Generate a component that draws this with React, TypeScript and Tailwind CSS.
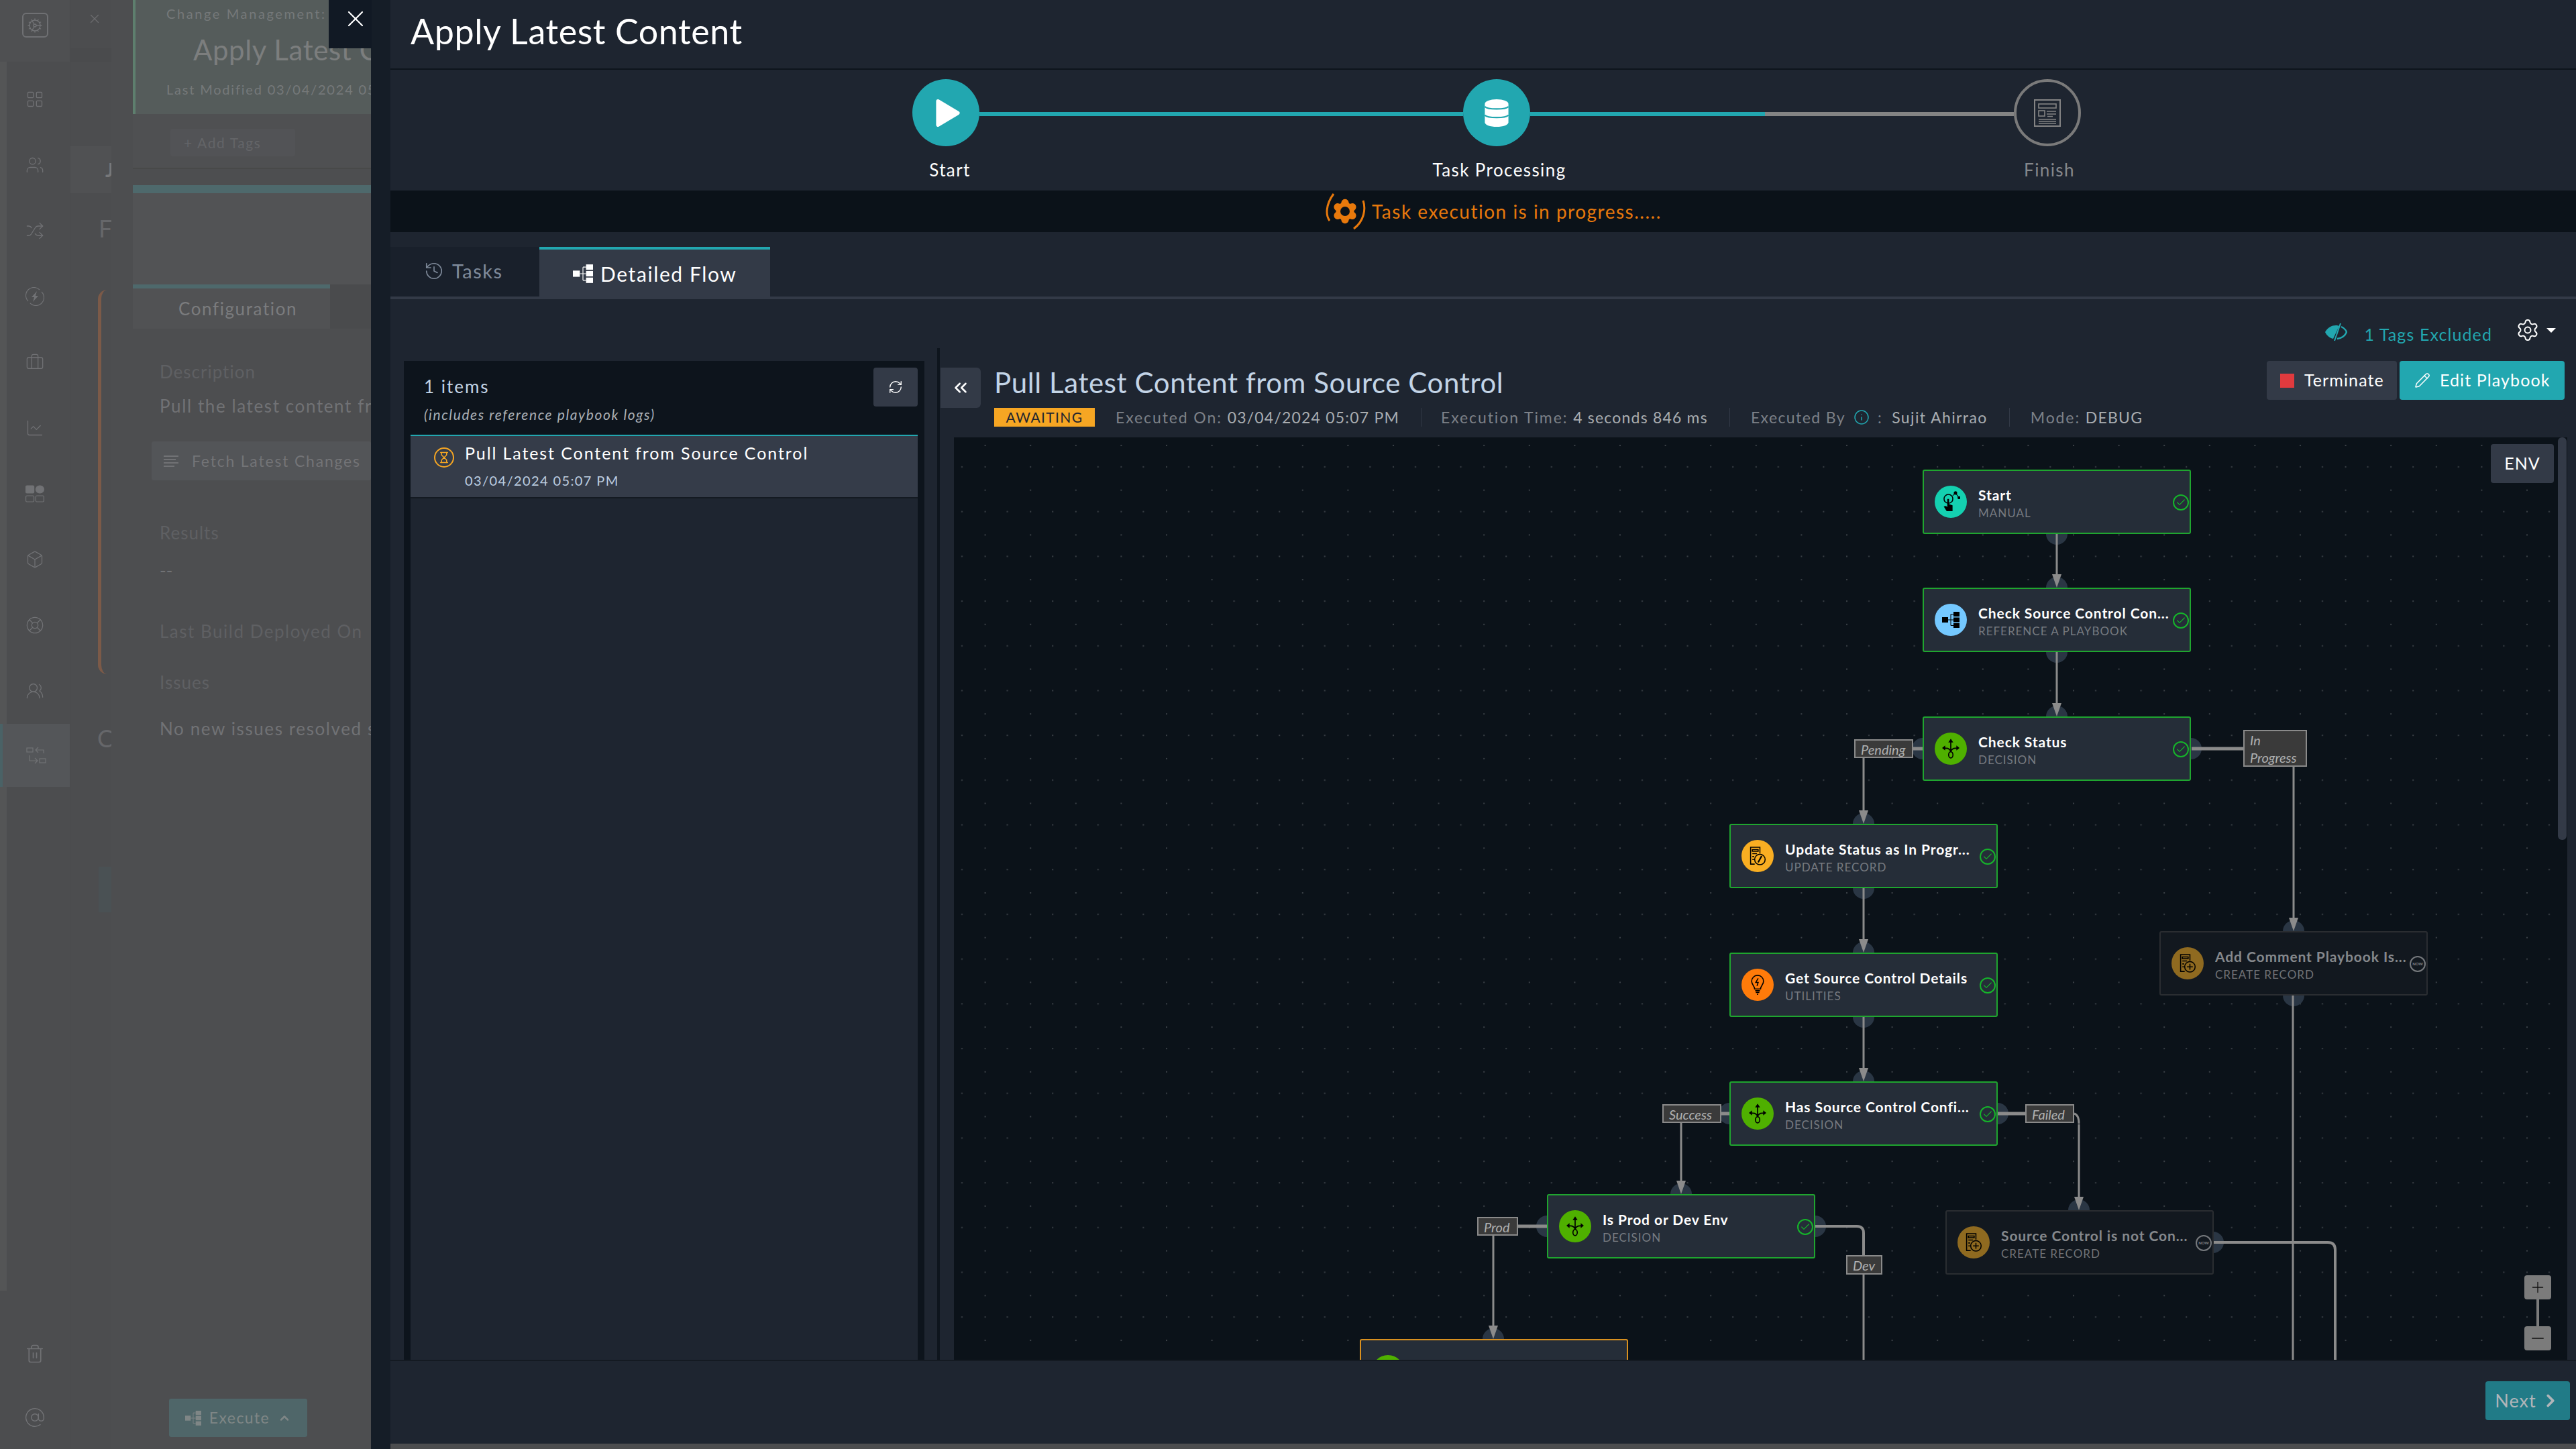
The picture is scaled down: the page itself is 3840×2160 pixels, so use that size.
import React from "react";
import { X, Users, Shuffle, Briefcase, ChartLine, Box, LifeBuoy, Trash2, AtSign, Settings, Pencil, RefreshCw, ChevronsLeft, ChevronRight, Hourglass, Info, Plus, Minus, Check, History, LayoutGrid, Users2, Cog, ChevronUp } from "lucide-react";

function FlowIcon({ className = "", fill = "currentColor" }: { className?: string; fill?: string }) {
  return (
    <svg viewBox="0 0 26 26" className={className} fill={fill}>
      <rect x="0" y="9" width="9" height="8" />
      <rect x="17" y="1" width="9" height="7" />
      <rect x="17" y="9.5" width="9" height="7" />
      <rect x="17" y="18" width="9" height="7" />
      <path d="M9 13H17M13 4.5V21.5M13 4.5H17M13 21.5H17" stroke={fill} strokeWidth="1" fill="none" />
    </svg>
  );
}

function DecisionIcon() {
  return (
    <svg viewBox="0 0 28 32" className="w-[26px] h-[30px]" fill="none" stroke="#000" strokeWidth="1.8">
      <path d="M14 3V20M14 20C11 15 8 15 2 15M14 20C17 15 20 15 26 15" />
      <path d="M14 0L10 6H18ZM0 15L5 11V19ZM28 15L23 11V19Z" fill="#000" stroke="none" />
      <ellipse cx="14" cy="26" rx="3.5" ry="5" />
    </svg>
  );
}

function RecordIcon({ kind }: { kind: "edit" | "plus" }) {
  return (
    <svg viewBox="0 0 30 34" className="w-[26px] h-[30px]" fill="none" stroke="#000" strokeWidth="1.8">
      <path d="M19 12V2H3V31H10" />
      <path d="M6 6H16V9H6ZM6 13H14M6 18H9M6 23H9" />
      <circle cx="19" cy="23" r="9" />
      {kind === "plus" ? <path d="M19 18V28M14 23H24" /> : <path d="M16 28L22 17" strokeWidth="2.6" />}
    </svg>
  );
}

function ManualIcon() {
  return (
    <svg viewBox="0 0 32 36" className="w-[28px] h-[32px]" fill="none" stroke="#000" strokeWidth="1.8">
      <circle cx="12" cy="13" r="7.5" />
      <path d="M19 8L24 3L30 11" strokeWidth="1.2" />
      <circle cx="24" cy="3" r="2" fill="#000" />
      <circle cx="30" cy="11" r="1.6" fill="#000" />
      <path d="M10 13H13V22L19 24V34H9L4 26L8 25L10 27Z" fill="#000" stroke="none" />
    </svg>
  );
}

function NodeIcon({ type }: { type: string }) {
  if (type === "manual") return <ManualIcon />;
  if (type === "flow") return <FlowIcon className="w-[26px] h-[26px]" fill="#000" />;
  if (type === "decision") return <DecisionIcon />;
  if (type === "edit") return <RecordIcon kind="edit" />;
  if (type === "plus") return <RecordIcon kind="plus" />;
  return (
    <svg viewBox="0 0 24 34" className="w-[22px] h-[30px]" fill="none" stroke="#000" strokeWidth="1.8">
      <path d="M7 24C7 19 2 17 2 11A10 10 0 0 1 22 11C22 17 17 19 17 24Z" />
      <path d="M13 6L9 13H13L11 19" strokeWidth="1.8" />
      <path d="M8 27H16M9 30H15M11 33H13" strokeWidth="2" />
    </svg>
  );
}

function RailZap() {
  return (
    <svg viewBox="0 0 28 28" className="w-[28px] h-[28px]" fill="none" stroke="currentColor" strokeWidth="1.2">
      <path d="M4 21A12 12 0 0 1 21 4M24 7A12 12 0 0 1 7 24" />
      <path d="M17 6L9 15H13L11 22L19 13H15Z" fill="currentColor" stroke="none" />
    </svg>
  );
}

function RailWidgets() {
  return (
    <svg viewBox="0 0 28 28" className="w-[28px] h-[28px]" fill="none" stroke="currentColor" strokeWidth="1.2">
      <rect x="0.6" y="2" width="12" height="11" rx="1.5" fill="currentColor" />
      <rect x="15.4" y="2" width="12" height="11" rx="5.5" fill="currentColor" />
      <rect x="0.6" y="17" width="12" height="9" rx="1.5" />
      <rect x="15.4" y="17" width="12" height="9" rx="1.5" />
    </svg>
  );
}

function RailSwap() {
  return (
    <svg viewBox="0 0 30 28" className="w-[30px] h-[28px]" fill="none" stroke="currentColor" strokeWidth="1.2">
      <rect x="1" y="3" width="9" height="6" />
      <rect x="20" y="19" width="9" height="6" />
      <path d="M26 11V6H15M18 2L14 6L18 10" />
      <path d="M5 14V22H16M13 18L17 22L13 26" />
    </svg>
  );
}

const nodes = [
  { pos: "left-[1444px] top-[48px]", title: "Start", sub: "MANUAL", icon: "manual", bg: "bg-[#14d0b0]", state: "done" },
  { pos: "left-[1444px] top-[224px]", title: "Check Source Control Con...", sub: "REFERENCE A PLAYBOOK", icon: "flow", bg: "bg-[#74c8ff]", state: "done" },
  { pos: "left-[1444px] top-[416px]", title: "Check Status", sub: "DECISION", icon: "decision", bg: "bg-[#4fb000]", state: "done" },
  { pos: "left-[1156px] top-[576px]", title: "Update Status as In Progr...", sub: "UPDATE RECORD", icon: "edit", bg: "bg-[#f9ae22]", state: "done" },
  { pos: "left-[1156px] top-[768px]", title: "Get Source Control Details", sub: "UTILITIES", icon: "bulb", bg: "bg-[#ff7b0a]", state: "done" },
  { pos: "left-[1156px] top-[960px]", title: "Has Source Control Confi...", sub: "DECISION", icon: "decision", bg: "bg-[#4fb000]", state: "done" },
  { pos: "left-[884px] top-[1128px]", title: "Is Prod or Dev Env", sub: "DECISION", icon: "decision", bg: "bg-[#4fb000]", state: "done" },
  { pos: "left-[1797px] top-[736px]", title: "Add Comment Playbook Is...", sub: "CREATE RECORD", icon: "plus", bg: "bg-[#8f6a20]", state: "skip" },
  { pos: "left-[1478px] top-[1152px]", title: "Source Control is not Con...", sub: "CREATE RECORD", icon: "plus", bg: "bg-[#8f6a20]", state: "skip" },
  { pos: "left-[605px] top-[1344px]", title: "", sub: "", icon: "decision", bg: "bg-[#4fb000]", state: "run" },
];

const labels = [
  { pos: "left-[1342px] top-[450px] w-[88px] h-[28px]", text: "Pending" },
  { pos: "left-[1922px] top-[436px] w-[95px] h-[55px]", text: "In Progress" },
  { pos: "left-[1056px] top-[994px] w-[88px] h-[28px]", text: "Success" },
  { pos: "left-[1597px] top-[994px] w-[73px] h-[28px]", text: "Failed" },
  { pos: "left-[780px] top-[1162px] w-[61px] h-[28px]", text: "Prod" },
  { pos: "left-[1330px] top-[1219px] w-[54px] h-[29px]", text: "Dev" },
];

function FlowNode({ n }: { n: (typeof nodes)[number] }) {
  const skip = n.state === "skip";
  const border = n.state === "done" ? "border-[#1fa52f]" : n.state === "run" ? "border-[#d9901f]" : "border-[#2a2d31]";
  return (
    <div className={`absolute ${n.pos} w-[400px] h-[96px] rounded-[3px] border-2 ${border} ${skip ? "bg-[#12181f]" : "bg-[#252d38]"} flex items-center pl-[16px]`}>
      <div className={`w-[48px] h-[48px] rounded-full ${n.bg} flex items-center justify-center shrink-0`}>
        <NodeIcon type={n.icon} />
      </div>
      <div className="ml-[17px] w-[290px] overflow-hidden whitespace-nowrap pt-[5px]">
        <div className={`text-[21px] leading-[28px] font-bold tracking-[0.9px] ${skip ? "text-[#85888c]" : "text-white"}`}>{n.title}</div>
        <div className={`text-[17px] leading-[25px] tracking-[1px] ${skip ? "text-[#6f7276]" : "text-[#777b81]"}`}>{n.sub}</div>
      </div>
      {n.title && (
        <div className={`absolute right-[1px] top-[35px] w-[24px] h-[24px] rounded-full border-2 flex items-center justify-center ${skip ? "border-[#777a7e]" : "border-[#15b52a]"}`}>
          {skip ? <span className="text-[6px] leading-none text-[#85888c] font-bold">NOW</span> : <Check size={16} strokeWidth={1.6} className="text-[#15b52a]" />}
        </div>
      )}
    </div>
  );
}

function Edges() {
  const ports: [number, number][] = [
    [3066, 796], [3066, 876], [3066, 972], [3066, 1068], [2866, 1116], [3266, 1116],
    [2778, 1228], [2778, 1324], [2778, 1420], [2778, 1516], [2778, 1612], [2578, 1660], [2978, 1660],
    [3419, 1388], [3419, 1484], [2506, 1780], [2306, 1828], [2706, 1828], [3099, 1804], [3299, 1852], [2226, 1996],
  ];
  const arrows: [number, number][] = [[3066, 876], [3066, 1068], [2778, 1228], [2778, 1420], [2778, 1612], [3419, 1388], [2506, 1780], [3099, 1804], [2226, 1996]];
  return (
    <svg viewBox="1422 652 2405 1375" className="absolute inset-0 w-full h-full">
      <defs>
        <pattern id="dots" x="3428" y="663" width="67.6" height="66.7" patternUnits="userSpaceOnUse">
          <rect x="0" y="0" width="2" height="2" fill="#3a4046" />
          <rect x="0" y="32" width="2" height="2" fill="#3a4046" />
          <rect x="33" y="32" width="2" height="2" fill="#3a4046" />
        </pattern>
      </defs>
      <rect x="1422" y="652" width="2405" height="1375" fill="url(#dots)" />
      {ports.map(([x, y]) => (
        <circle key={`${x}-${y}`} cx={x} cy={y} r="16" fill="#2a3644" />
      ))}
      <g stroke="#8b8b8b" fill="none" strokeWidth="3">
        <path d="M3066 796V858M3066 972V1050M2778 1130V1210M2778 1324V1402M2778 1516V1594" />
        <path d="M3419 1143V1370M3418 1484V2027M2506 1674V1762M3099 1676V1786M2226 1842V1978" />
        <path d="M3092 1660H3092Q3099 1662 3099 1675" />
        <path d="M2778 1900V2027" />
        <path d="M3299 1852H3470Q3481 1852 3481 1863V2027" strokeWidth="4" />
        <path d="M2706 1828H2768Q2778 1828 2778 1838V1871" strokeWidth="4" />
        <path d="M2852 1116H2866M3267 1116H3344M2566 1660H2578M2978 1660H3019M2263 1828H2306" strokeWidth="5" />
      </g>
      {arrows.map(([x, y]) => (
        <polygon key={`a${x}-${y}`} points={`${x - 7},${y - 20} ${x + 7},${y - 20} ${x},${y}`} fill="#8b8b8b" />
      ))}
    </svg>
  );
}

function Rail() {
  const icons = [
    <LayoutGrid size={28} strokeWidth={1.1} />,
    <Users size={28} strokeWidth={1.1} />,
    <Shuffle size={28} strokeWidth={1.1} />,
    <RailZap />,
    <Briefcase size={28} strokeWidth={1.1} />,
    <ChartLine size={28} strokeWidth={1.1} />,
    <RailWidgets />,
    <Box size={28} strokeWidth={1.1} />,
    <LifeBuoy size={28} strokeWidth={1.1} />,
    <Users2 size={28} strokeWidth={1.1} />,
  ];
  return (
    <div className="w-[104px] shrink-0 h-full flex flex-col bg-[#4c4d4f] text-[#717275]">
      <div className="h-[92px] shrink-0 bg-[#4f5052] flex items-start justify-center pt-[19px]">
        <div className="w-[39px] h-[37px] rounded-[6px] border-2 border-[#6f7073] flex items-center justify-center">
          <Cog size={24} strokeWidth={1.4} />
        </div>
      </div>
      <div className="h-[1832px] shrink-0 border-l-[10px] border-[#545556] flex flex-col pt-[7px]">
        {icons.map((icon, i) => (
          <div key={i} className="h-[98px] shrink-0 pr-[10px] w-full flex items-center justify-center">
            {icon}
          </div>
        ))}
        <div className="h-[94px] shrink-0 w-[104px] -ml-[10px] bg-[#545659] border-l-4 border-[#4a6266] flex items-center justify-center">
          <RailSwap />
        </div>
      </div>
      <div className="mt-auto flex flex-col items-center gap-[64px] pb-[31px]">
        <Trash2 size={30} strokeWidth={1.3} />
        <AtSign size={32} strokeWidth={1.1} />
      </div>
    </div>
  );
}

function DimContent() {
  return (
    <div className="w-[355px] shrink-0 h-full flex flex-col overflow-hidden whitespace-nowrap bg-[#4d4e50] relative">
      <div className="h-[170px] bg-[#555c5b] border-l-4 border-[#5e7f6e] pl-[46px] pt-[5px] shrink-0">
        <div className="text-[20px] leading-[30px] tracking-[2.6px] text-[#75797a]">Change Management:</div>
        <div className="flex items-center h-[78px] ml-[20px]">
          <div className="w-[4px] h-[78px] bg-[#686b6e]" />
          <div className="ml-[20px] text-[42px] tracking-[0.6px] text-[#7c7e7e]">Apply Latest Content</div>
        </div>
        <div className="mt-[5px] text-[20px] leading-[30px] tracking-[1.8px] text-[#75797a]">Last Modified 03/04/2024 05:07 PM</div>
      </div>
      <div className="h-[82px] bg-[#4f5052] border-b-2 border-[#484949] pl-[56px] pt-[22px] shrink-0">
        <div className="w-[186px] h-[41px] bg-[#525356] rounded-[3px] pl-[20px] text-[21px] leading-[41px] tracking-[1.6px] text-[#646568]">+ Add Tags</div>
      </div>
      <div className="h-[24px] shrink-0" />
      <div className="h-[12px] bg-[#4e696c] shrink-0" />
      <div className="h-[136px] bg-[#525355] shrink-0" />
      <div className="flex shrink-0 h-[66px]">
        <div className="w-[294px] border-t-[6px] border-[#4e696c] bg-[#515254] text-[26px] leading-[60px] text-[#7b7c7e] tracking-[1.6px] pl-[68px]">Configuration</div>
        <div className="flex-1 bg-[#4a4b4d]" />
      </div>
      <div className="pl-[40px] pt-[44px]">
        <div className="text-[26px] leading-[40px] tracking-[1px] text-[#5f6063]">Description</div>
        <div className="text-[26px] leading-[40px] mt-[11px] text-[#717275] tracking-[1.6px]">Pull the latest content from</div>
        <div className="mt-[33px] -ml-[12px] h-[58px] bg-[#535558] rounded-[3px] flex items-center pl-[18px] gap-[18px] text-[23px] text-[#737477] tracking-[1.8px]">
          <div className="w-[24px] flex flex-col gap-[3px]">
            <div className="h-[2px] w-[22px] bg-[#717275]" />
            <div className="h-[2px] w-[18px] bg-[#717275]" />
            <div className="h-[2px] w-[22px] bg-[#717275]" />
            <div className="h-[2px] w-[16px] bg-[#717275]" />
          </div>
          Fetch Latest Changes
        </div>
        <div className="mt-[58px] text-[26px] leading-[40px] tracking-[1px] text-[#5f6063]">Results</div>
        <div className="text-[26px] leading-[50px] text-[#717275] mt-[11px]">--</div>
        <div className="mt-[46px] text-[26px] leading-[40px] tracking-[1.5px] text-[#5f6063]">Last Build Deployed On</div>
        <div className="mt-[36px] text-[26px] leading-[40px] tracking-[1px] text-[#5f6063]">Issues</div>
        <div className="mt-[29px] text-[26px] leading-[40px] text-[#717275] tracking-[1.6px]">No new issues resolved since</div>
      </div>
      <div className="absolute left-[54px] top-[2085px] w-[206px] h-[57px] bg-[#4f6669] rounded-[3px] flex items-center justify-center gap-[12px] text-[23px] text-[#7f8686] tracking-[1.4px]">
        <FlowIcon className="w-[24px] h-[24px]" />
        Execute
        <ChevronUp size={20} strokeWidth={3} />
      </div>
    </div>
  );
}

function DimBack() {
  return (
    <div className="w-[553px] shrink-0 h-full flex bg-[#4c4d4f] overflow-hidden">
      <Rail />
      <div className="w-[62px] shrink-0 h-full relative whitespace-nowrap overflow-hidden text-[#77787a] border-l border-[#4a4b4d]">
        <div className="ml-[25px] mt-[17px] text-[#6c6d70]">
          <X size={22} strokeWidth={1.3} />
        </div>
        <div className="mt-[33px] h-[20px] bg-[#4a4b4d]" />
        <div className="mt-[126px] h-[70px] bg-[#505153] pl-[52px] text-[28px] leading-[70px] font-bold">J</div>
        <div className="mt-[30px] pl-[42px] text-[36px] leading-[44px] text-[#66676a]">F</div>
        <div className="mt-[70px] ml-[41px] h-[573px] w-[30px] rounded-l-[14px] border-l-[5px] border-[#7c5a48]" />
        <div className="mt-[73px] pl-[40px] text-[36px] leading-[44px] text-[#66676a]">C</div>
        <div className="mt-[170px] ml-[42px] h-[68px] bg-[#4a5154]" />
      </div>
      <div className="w-[32px] shrink-0 h-full bg-[#4d4e50]" />
      <DimContent />
    </div>
  );
}

function Stepper() {
  return (
    <div className="h-[180px] shrink-0 flex flex-col pt-[14px]">
      <div className="flex items-center ml-[778px] text-white">
        <div className="w-[100px] h-[100px] rounded-full bg-[#22a7b0] flex items-center justify-center">
          <svg viewBox="0 0 36 42" className="w-[36px] h-[41px] ml-[6px]" fill="#fff" stroke="#fff" strokeWidth="6" strokeLinejoin="round">
            <path d="M3 3L33 21L3 39Z" />
          </svg>
        </div>
        <div className="w-[721px] h-[6px] mt-[4px] bg-[#22a7b0]" />
        <div className="w-[100px] h-[100px] rounded-full bg-[#22a7b0] flex items-center justify-center">
          <svg viewBox="0 0 36 42" className="w-[36px] h-[41px]" fill="#fff">
            <path d="M0 7C0 3 8 0 18 0S36 3 36 7V35C36 39 28 42 18 42S0 39 0 35Z" />
            <path d="M0 11C3 16 33 16 36 11M0 24C3 29 33 29 36 24" fill="none" stroke="#22a7b0" strokeWidth="2.2" />
          </svg>
        </div>
        <div className="w-[350px] h-[6px] mt-[4px] bg-[#22a7b0]" />
        <div className="w-[371px] h-[6px] mt-[4px] bg-[#848484]" />
        <div className="w-[100px] h-[100px] rounded-full border-[4px] border-[#7a7a7a] flex items-center justify-center">
          <svg viewBox="0 0 40 41" className="w-[40px] h-[41px]" fill="none" stroke="#848484" strokeWidth="2">
            <rect x="1" y="1" width="38" height="39" />
            <rect x="7" y="7" width="26" height="6" strokeWidth="1.6" />
            <rect x="7" y="17" width="9" height="8" strokeWidth="1.6" />
            <path d="M19 18H33M19 22H33M20 25.5H28M7 30H33M7 33H33M7 36H33" strokeWidth="1.6" />
          </svg>
        </div>
      </div>
      <div className="flex mt-[18px] text-[26px] leading-[34px] text-white tracking-[1.4px]">
        <div className="ml-[684px] w-[300px] text-center">Start</div>
        <div className="ml-[519px] w-[300px] text-center">Task Processing</div>
        <div className="ml-[520px] w-[300px] text-center text-[#85888c]">Finish</div>
      </div>
    </div>
  );
}

function ListPanel() {
  return (
    <div className="w-[776px] shrink-0 mt-[92px] bg-[#0d141c] flex flex-col">
      <div className="h-[110px] shrink-0 flex justify-between pl-[30px] pr-[10px] pt-[10px]">
        <div>
          <div className="text-[26px] leading-[34px] mt-[11px] tracking-[2px] text-[#c3d4e6]">1 items</div>
          <div className="text-[21px] leading-[30px] mt-[10px] italic tracking-[1.6px] text-[#aab0b6]">(includes reference playbook logs)</div>
        </div>
        <div className="w-[66px] h-[58px] bg-[#333a47] rounded-[4px] flex items-center justify-center text-white">
          <RefreshCw size={22} strokeWidth={1.5} />
        </div>
      </div>
      <div className="mx-[10px] flex-1 bg-[#1e2530] flex flex-col">
        <div className="h-[95px] bg-[#353c49] border-t-2 border-[#22a7b0] border-b-2 border-b-[#141a22] flex pl-[35px] pt-[9px] shrink-0">
          <div className="w-[30px] h-[30px] rounded-full border-2 border-[#f6a623] flex items-center justify-center mt-[8px] text-[#f6a623]">
            <Hourglass size={18} strokeWidth={2} />
          </div>
          <div className="ml-[16px]">
            <div className="text-[25px] leading-[32px] tracking-[1.9px] text-white">Pull Latest Content from Source Control</div>
            <div className="text-[20px] leading-[26px] mt-[12px] tracking-[1.4px] text-[#bccde0]">03/04/2024 05:07 PM</div>
          </div>
        </div>
      </div>
    </div>
  );
}

function Meta({ label, value }: { label: string; value: string }) {
  return (
    <span className="text-[#7d8188] tracking-[1.9px]">
      {label} <span className="text-[#a9adb1] tracking-[1.2px]">{value}</span>
    </span>
  );
}

function DetailHeader() {
  return (
    <div className="h-[114px] shrink-0 flex">
      <div className="w-[60px] h-[60px] mt-[10px] bg-[#333a47] rounded-r-[6px] flex items-center justify-center text-white">
        <ChevronsLeft size={30} strokeWidth={2} />
      </div>
      <div className="ml-[20px] flex-1">
        <div className="text-[42px] leading-[52px] mt-[6px] tracking-[0.6px] text-[#c3d4e6]">Pull Latest Content from Source Control</div>
        <div className="flex items-center mt-[12px] text-[23px] leading-[28px] tracking-[1.4px]">
          <div className="w-[150px] h-[28px] bg-[#f6a623] text-[#1e2530] text-center text-[21px]">AWAITING</div>
          <div className="ml-[31px]"><Meta label="Executed On:" value="03/04/2024 05:07 PM" /></div>
          <div className="w-[1px] h-[28px] bg-[#333a47] ml-[32px]" />
          <div className="ml-[29px]"><Meta label="Execution Time:" value="4 seconds 846 ms" /></div>
          <div className="w-[1px] h-[28px] bg-[#333a47] ml-[32px]" />
          <div className="ml-[31px] flex items-center text-[#7d8188]">
            Executed By
            <Info size={24} strokeWidth={1.5} className="mx-[12px] text-[#22a7b0]" />
            :<span className="ml-[14px] text-[#a9adb1]">Sujit Ahirrao</span>
          </div>
          <div className="w-[1px] h-[28px] bg-[#333a47] ml-[32px]" />
          <div className="ml-[31px]"><Meta label="Mode:" value=" DEBUG" /></div>
        </div>
      </div>
      <div className="flex gap-[4px] mr-[4px]">
        <div className="w-[194px] h-[58px] bg-[#333a47] rounded-[4px] flex items-center pl-[20px] gap-[15px] text-[25px] tracking-[1.1px] text-white">
          <div className="w-[21px] h-[21px] bg-[#e03a3e]" />
          Terminate
        </div>
        <div className="w-[246px] h-[58px] bg-[#22a7b0] rounded-[4px] flex items-center pl-[22px] gap-[14px] text-[25px] tracking-[1.1px] text-white">
          <Pencil size={24} strokeWidth={1.5} />
          Edit Playbook
        </div>
      </div>
    </div>
  );
}

function Canvas() {
  return (
    <div className="flex-1 ml-[20px] bg-[#0b1219] relative overflow-hidden">
      <Edges />
      {nodes.map((n, i) => (
        <FlowNode key={i} n={n} />
      ))}
      {labels.map((l) => (
        <div key={l.text} className={`absolute ${l.pos} bg-[#3a3a3a] border-2 border-[#8a8a8a] text-[20px] leading-[26px] italic text-[#b0b0b0] pl-[8px]`}>
          {l.text}
        </div>
      ))}
      <div className="absolute right-[20px] top-[10px] w-[94px] h-[58px] bg-[#333a47] rounded-[4px] flex items-center justify-center text-[25px] tracking-[1px] text-white">ENV</div>
      <div className="absolute right-[1px] top-0 w-[13px] h-[600px] rounded-[6px] bg-[#333a47]" />
      <div className="absolute right-[24px] bottom-[14px] flex flex-col items-center text-[#111]">
        <div className="w-[40px] h-[36px] bg-[#7b7b7b] rounded-[4px] flex items-center justify-center"><Plus size={26} strokeWidth={1.2} /></div>
        <div className="w-[4px] h-[40px] bg-[#7b7b7b]" />
        <div className="w-[40px] h-[36px] bg-[#7b7b7b] rounded-[4px] flex items-center justify-center"><Minus size={28} strokeWidth={1.4} /></div>
      </div>
    </div>
  );
}

export default function App() {
  return (
    <div className="w-[3840px] h-[2160px] flex overflow-hidden bg-[#1e2530] font-[Lato,sans-serif] relative">
      <DimBack />
      <div className="w-[29px] shrink-0 h-full bg-[#151d27]" />
      <div className="absolute left-[490px] top-0 w-[64px] h-[72px] bg-[#111924] flex items-start pt-[8px] pl-[20px] text-white">
        <X size={40} strokeWidth={1.3} />
      </div>
      <main className="flex-1 min-w-0 h-full flex flex-col bg-[#1e2530]">
        <header className="h-[104px] shrink-0 border-b-2 border-[#0d141c] pl-[30px] text-[52px] leading-[92px] tracking-[0.6px] text-white">Apply Latest Content</header>
        <Stepper />
        <div className="h-[62px] shrink-0 bg-[#0b1219] flex items-center pl-[1392px] text-[28px] tracking-[1.5px] text-[#e8790c]">
          <div className="relative w-[62px] h-[56px] shrink-0 flex items-center justify-center">
            <svg viewBox="0 0 62 56" className="absolute inset-0 w-[62px] h-[56px]" fill="none" stroke="#e8790c" strokeWidth="3">
              <path d="M14 2C2 18 2 34 8 42M44 54C60 42 62 24 58 12" />
            </svg>
            <Settings size={40} fill="#e8790c" strokeWidth={2} />
            <div className="absolute left-[24px] top-[21px] w-[14px] h-[14px] rounded-full bg-[#0b1219]" />
          </div>
          <span className="ml-[9px]">Task execution is in progress.....</span>
        </div>
        <div className="h-[22px] shrink-0" />
        <div className="h-[78px] shrink-0 flex border-b-4 border-[#333a47]">
          <div className="w-[222px] bg-[#19202b] flex items-center pl-[50px] gap-[12px] text-[29px] tracking-[1.5px] pb-[2px] text-[#7f8a9a]">
            <History size={30} strokeWidth={1.3} />
            Tasks
          </div>
          <div className="w-[344px] bg-[#333a47] border-t-4 border-[#22a7b0] flex items-center pl-[50px] gap-[11px] text-[30px] tracking-[1.6px] pt-[2px] text-white">
            <FlowIcon className="w-[30px] h-[30px]" />
            Detailed Flow
          </div>
        </div>
        <div className="flex-1 min-h-0 flex relative pl-[20px]">
          <ListPanel />
          <div className="w-[4px] shrink-0 mt-[73px] ml-[19px] bg-[#0e151d]" />
          <div className="flex-1 min-w-0 flex flex-col ml-[1px]">
            <div className="h-[92px] shrink-0 flex justify-end items-start pt-[34px] pr-[17px] text-[#22a7b0] text-[25px] tracking-[1.1px]">
              <svg viewBox="0 0 34 26" className="w-[34px] h-[26px] mt-[2px]" fill="none">
                <path d="M13 23C8 22 3 18 1 13C5 6 11 3 17 3C19 3 21 3.500 22 4Z" fill="#22a7b0" />
                <path d="M25 5C29 7 32 10 33 13C31 18 26 22 19 23" stroke="#22a7b0" strokeWidth="2.4" />
                <path d="M24 0L15 26" stroke="#22a7b0" strokeWidth="2" />
              </svg>
              <span className="ml-[25px]">1 Tags Excluded</span>
              <Settings size={36} strokeWidth={1.3} className="ml-[35px] -mt-[6px] text-white" />
              <div className="ml-[10px] mt-[9px] border-x-[7px] border-t-[7px] border-x-transparent border-t-white" />
            </div>
            <DetailHeader />
            <Canvas />
          </div>
          <div className="w-[13px] shrink-0" />
        </div>
        <footer className="h-[125px] shrink-0 border-t-2 border-[#141a22] flex justify-end items-start pt-[30px] pr-[9px]">
          <div className="w-[126px] h-[58px] bg-[#217b87] rounded-[4px] flex items-center justify-center gap-[6px] text-[27px] tracking-[1px] text-[#b0b5b9]">
            Next
            <ChevronRight size={30} strokeWidth={3} />
          </div>
        </footer>
        <div className="h-[8px] shrink-0 bg-[#4c4d4f]" />
      </main>
    </div>
  );
}
